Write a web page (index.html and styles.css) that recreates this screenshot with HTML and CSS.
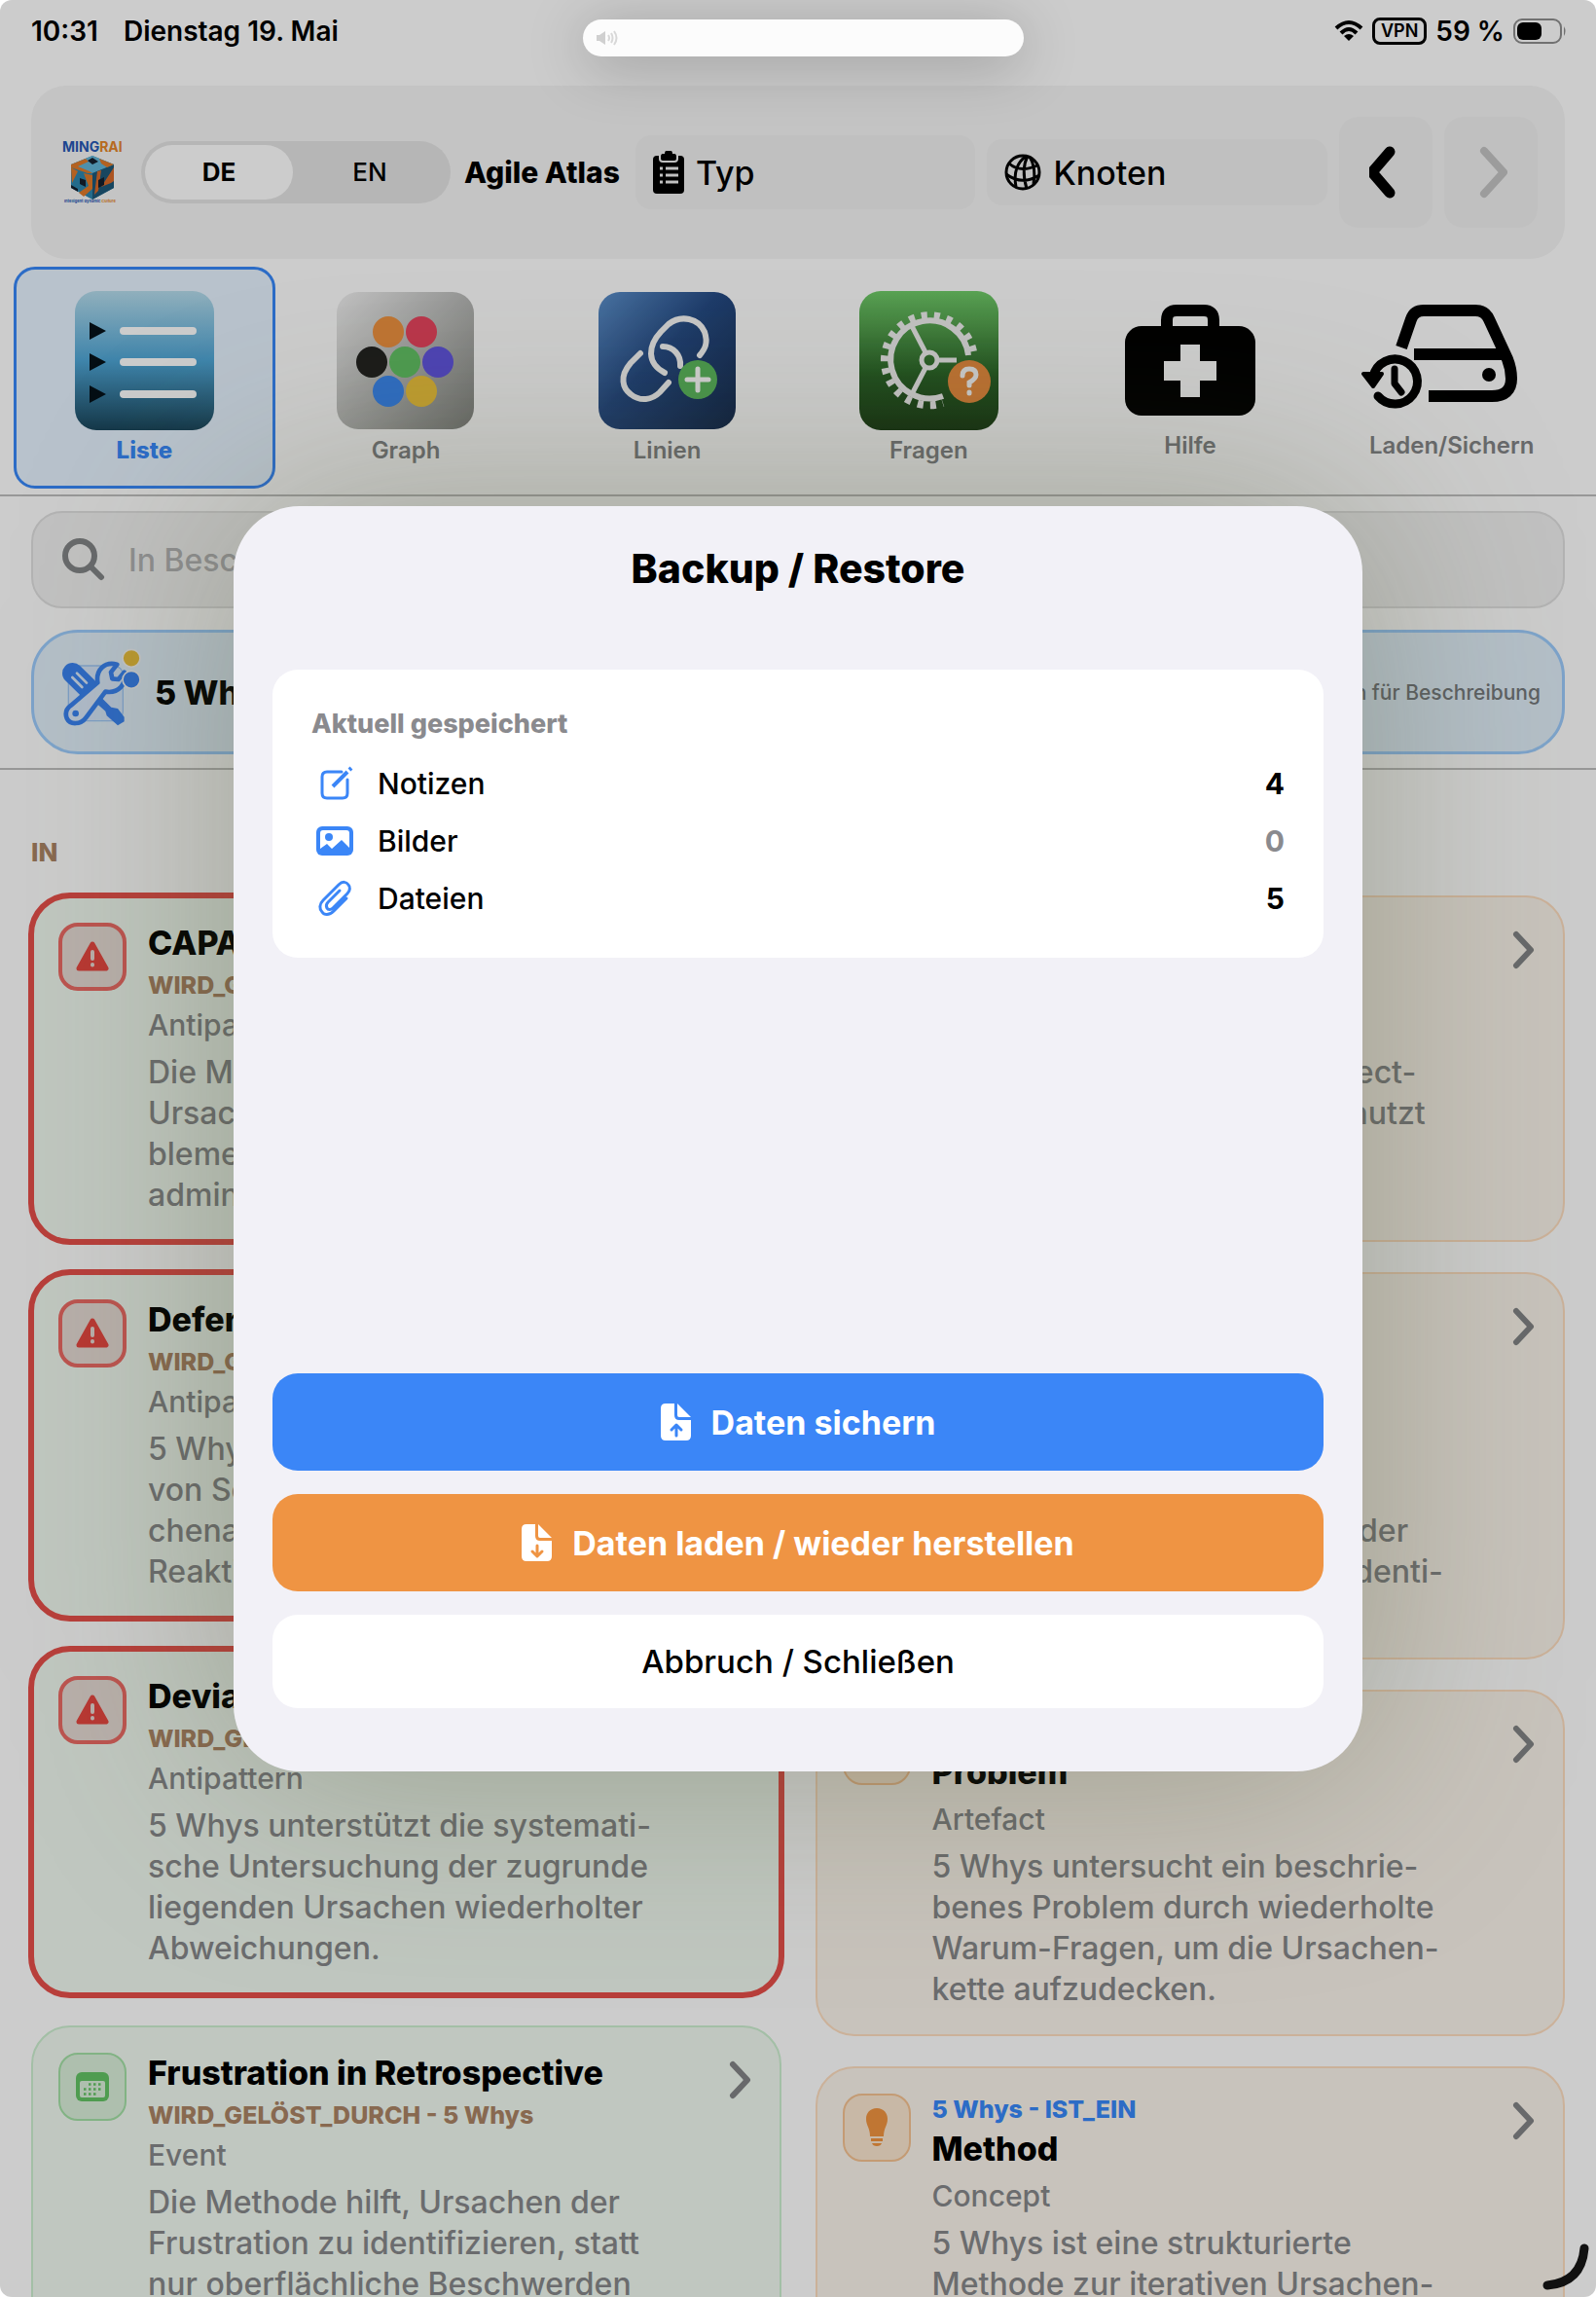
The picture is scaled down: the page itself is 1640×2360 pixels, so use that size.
FILE: index.html
```html
<!DOCTYPE html>
<html lang="de">
<head>
    <meta charset="UTF-8">
    <meta name="viewport" content="width=device-width, initial-scale=1.0">
    <title>Agile Atlas</title>
    <link rel="stylesheet" href="styles.css">
</head>
<body>
    <!-- Shared icons -->
    <svg class="sprite" aria-hidden="true">
        <symbol id="chevron" viewBox="0 0 24 40">
            <path d="M4 4L19 20L4 36" fill="none" stroke="currentColor" stroke-width="6" stroke-linecap="round" stroke-linejoin="round"/>
        </symbol>
        <symbol id="warning" viewBox="0 0 34 32">
            <path d="M17 3L31 28H3Z" fill="currentColor" stroke="currentColor" stroke-width="5" stroke-linejoin="round"/>
            <path d="M17 11V18M17 24V24.5" stroke="#e7dbd5" stroke-width="4" stroke-linecap="round"/>
        </symbol>
        <symbol id="bulb" viewBox="0 0 24 40">
            <path d="M12 0C5 0 1 5 1 11C1 18 5 20 5 29H19C19 20 23 18 23 11C23 5 19 0 12 0Z" fill="currentColor"/>
            <path d="M6 31H18V34H6ZM7 36H17Q16 39 12 39Q8 39 7 36Z" fill="currentColor"/>
        </symbol>
    </svg>

    <div class="app">
        <!-- Status Bar -->
        <div class="status-bar">
            <div class="status-left">
                <span>10:31</span>
                <span>Dienstag 19. Mai</span>
            </div>
            <div class="status-right">
                <svg width="30" height="24" viewBox="0 0 30 24" fill="none" stroke="#000" stroke-width="4">
                    <path d="M2 9Q15 -3 28 9M7 14Q15 6 23 14"/>
                    <path d="M15 22L10 17Q15 13 20 17Z" fill="#000" stroke="none"/>
                </svg>
                <span class="vpn">VPN</span>
                <span>59 %</span>
                <svg width="55" height="28" viewBox="0 0 55 28">
                    <rect x="1" y="2" width="48" height="24" rx="8" fill="none" stroke="#8e8e8e" stroke-width="2"/>
                    <rect x="4" y="5" width="25" height="18" rx="6"/>
                    <path d="M52 9Q55 14 52 19Z" fill="#8e8e8e"/>
                </svg>
            </div>
        </div>

        <!-- Header -->
        <header class="toolbar">
            <svg class="logo" viewBox="0 0 62 66">
                <text x="0" y="12" class="logo-name" fill="#2658b4">MING<tspan fill="#e48528">RAI</tspan></text>
                <path d="M31 16L53 25V49L31 61L9 49V25Z" fill="#2e86ae"/>
                <path d="M31 16L53 25L31 34L9 25Z" fill="#62b4d6"/>
                <path d="M31 34L53 25V49L31 61Z" fill="#1d5878"/>
                <path d="M9 25L24 19L27 22L16 27L28 32L31 34L26 34L9 28ZM38 19L53 25L46 28L40 24ZM9 28L16 32L10 44ZM22 34L31 36V50L22 58L17 54L27 47Z" fill="#e07a28"/>
                <path d="M53 28L40 48L50 44L53 42ZM36 32L40 31L37 52L33 56Z" fill="#d8692a"/>
                <path d="M26 21L31 18L37 22L31 25ZM18 39L24 41V48L18 45ZM37 41L43 38V46L37 49ZM9 46L16 50V53L9 49Z" fill="#15202e"/>
                <text x="2" y="64" class="logo-claim" fill="#2658b4">Intelligent dynamic <tspan fill="#e48528">Culture</tspan></text>
            </svg>
            <div class="segmented">
                <input type="radio" name="lang" id="lang-de" checked>
                <label for="lang-de">DE</label>
                <input type="radio" name="lang" id="lang-en">
                <label for="lang-en">EN</label>
            </div>
            <h1 class="app-name">Agile Atlas</h1>
            <button class="filter filter-type">
                <svg width="32" height="44" viewBox="0 0 32 44">
                    <path d="M4 5H28Q32 5 32 9V40Q32 44 28 44H4Q0 44 0 40V9Q0 5 4 5Z"/>
                    <path d="M7 3V8Q7 11 10 11H22Q25 11 25 8V3" fill="none" stroke="#f1f1f1" stroke-width="2"/>
                    <path d="M10 3H12A4 4 0 0 1 20 3H22Q24 3 24 6Q24 9 21 9H11Q8 9 8 6Q8 3 10 3Z"/>
                    <path d="M7 18H10M13 18H26M7 25H10M13 25H26M7 32H10M13 32H26" stroke="#f1f1f1" stroke-width="3"/>
                </svg>
                Typ
            </button>
            <button class="filter">
                <svg width="38" height="38" viewBox="0 0 38 38" fill="none" stroke="#000" stroke-width="3">
                    <circle cx="19" cy="19" r="17"/>
                    <path d="M23 2Q8 12 12 34M24 2Q17 16 23 36M26 3Q33 14 30 31M5 10Q16 20 34 12M2 21Q18 33 36 22"/>
                </svg>
                Knoten
            </button>
            <button class="nav-button" aria-label="Zurück">
                <svg width="34" height="56" viewBox="6 0 34 56"><path d="M27 7L9 28L27 49" fill="none" stroke="#000" stroke-width="11" stroke-linecap="round" stroke-linejoin="round"/></svg>
            </button>
            <button class="nav-button" aria-label="Vor">
                <svg width="34" height="56" viewBox="-4 0 34 56"><path d="M6 6L26 28L6 50" fill="none" stroke="#c4c4c4" stroke-width="8" stroke-linecap="round" stroke-linejoin="round"/></svg>
            </button>
        </header>

        <!-- Tabs -->
        <nav class="tabs">
            <button class="tab active">
                <svg width="143" height="143" viewBox="0 0 143 143">
                    <defs><linearGradient id="g-list" x2="0" y2="1"><stop offset="0" stop-color="#b5dcec"/><stop offset=".5" stop-color="#4fa6d6"/><stop offset="1" stop-color="#1b465b"/></linearGradient></defs>
                    <rect width="143" height="143" rx="22" fill="url(#g-list)"/>
                    <path d="M15 32L32 41L15 50ZM15 64L32 73L15 82ZM15 97L32 106L15 115Z" fill="#06121a"/>
                    <path d="M50 41H121M50 73H121M50 106H121" stroke="#fff" stroke-width="8" stroke-linecap="round"/>
                </svg>
                <span>Liste</span>
            </button>
            <button class="tab">
                <svg width="143" height="143" viewBox="0 0 143 143">
                    <defs><linearGradient id="g-graph" x2="1" y2="1"><stop offset="0" stop-color="#f2f2f2"/><stop offset="1" stop-color="#80827e"/></linearGradient></defs>
                    <rect x="1" y="1" width="141" height="141" rx="22" fill="url(#g-graph)"/>
                    <circle cx="54" cy="42" r="16" fill="#ee9140"/>
                    <circle cx="88" cy="42" r="16" fill="#e8445e"/>
                    <circle cx="37" cy="73" r="16" fill="#222220"/>
                    <circle cx="71" cy="73" r="16" fill="#62c264"/>
                    <circle cx="105" cy="73" r="16" fill="#6154e0"/>
                    <circle cx="54" cy="103" r="16" fill="#3a87f0"/>
                    <circle cx="88" cy="103" r="16" fill="#eec43c"/>
                </svg>
                <span>Graph</span>
            </button>
            <button class="tab">
                <svg width="143" height="143" viewBox="0 0 143 143">
                    <defs><linearGradient id="g-link" x2="1" y2="1"><stop offset="0" stop-color="#5c90cc"/><stop offset=".45" stop-color="#264b84"/><stop offset="1" stop-color="#152a4c"/></linearGradient></defs>
                    <rect x="1" y="1" width="141" height="141" rx="22" fill="url(#g-link)"/>
                    <g fill="none" stroke="#f8f8f8" stroke-width="6" stroke-linecap="round">
                        <path d="M69 84C50 74 52 56 65 42L73 34C86 24 104 28 110 42C114 54 110 60 105 66"/>
                        <path d="M44 64L34 74C22 88 26 100 34 106C44 114 56 112 64 104L73 94"/>
                        <path d="M67 57C78 57 86 66 85 77"/>
                    </g>
                    <circle cx="103" cy="91" r="20" fill="#5cba5e"/>
                    <path d="M103 80V102M92 91H114" stroke="#fff" stroke-width="5" stroke-linecap="round"/>
                </svg>
                <span>Linien</span>
            </button>
            <button class="tab">
                <svg width="143" height="143" viewBox="0 0 143 143">
                    <defs><linearGradient id="g-ask" x2="0" y2="1"><stop offset="0" stop-color="#70cc69"/><stop offset=".6" stop-color="#2b6428"/><stop offset="1" stop-color="#1c3e17"/></linearGradient></defs>
                    <rect width="143" height="143" rx="22" fill="url(#g-ask)"/>
                    <g fill="none" stroke="#f0f0f0">
                        <path d="M112 66A40 40 0 1 0 86 108" stroke-width="6"/>
                        <path d="M117 62A46 46 0 1 0 86 115" stroke-width="8" stroke-dasharray="6 7"/>
                        <circle cx="72" cy="71" r="8" stroke-width="5"/>
                        <path d="M68 63L54 36M68 79L54 106M80 71H100" stroke-width="5"/>
                    </g>
                    <circle cx="113" cy="93" r="22" fill="#e88d3f"/>
                    <path d="M106 87Q106 80 113 80Q120 80 120 86Q120 90 113 94V97M113 104V105" fill="none" stroke="#f8f8f8" stroke-width="5" stroke-linecap="round"/>
                </svg>
                <span>Fragen</span>
            </button>
            <button class="tab">
                <svg width="134" height="138" viewBox="0 -14 134 138">
                    <path d="M43 28V16Q43 6 53 6H81Q91 6 91 16V28" fill="none" stroke="#000" stroke-width="12"/>
                    <rect y="22" width="134" height="92" rx="17"/>
                    <path d="M67 51V85M50 68H84" stroke="#fff" stroke-width="20" stroke-linecap="square"/>
                </svg>
                <span>Hilfe</span>
            </button>
            <button class="tab">
                <svg width="186" height="138" viewBox="0 -14 186 138" fill="none" stroke="#000" stroke-width="12">
                    <path d="M41 44L51 15Q54 6 64 6H117Q127 6 131 15L150 56Q154 66 154 76Q154 94 134 94H69"/>
                    <path d="M54 51H144"/>
                    <circle cx="131" cy="72" r="7" fill="#000" stroke="none"/>
                    <path d="M12 74A23 23 0 1 1 17 94" stroke-width="9" stroke-linecap="round"/>
                    <path d="M2 71H21L12 84Z" fill="#000" stroke-width="4" stroke-linejoin="round"/>
                    <path d="M34 66V81L41 90" stroke-width="7" stroke-linecap="round" stroke-linejoin="round"/>
                </svg>
                <span>Laden/Sichern</span>
            </button>
        </nav>

        <!-- Search -->
        <section class="finder">
            <label class="search">
                <svg width="44" height="44" viewBox="0 0 44 44" fill="none" stroke="#838587" stroke-width="6" stroke-linecap="round"><circle cx="18" cy="18" r="15"/><path d="M29 29L40 40"/></svg>
                <input type="search" placeholder="In Beschreibung suchen" aria-label="Suche">
            </label>
            <div class="node">
                <svg width="82" height="80" viewBox="36 44 246 240">
                    <rect x="58" y="98" width="168" height="170" rx="28" fill="#d6e7fb" stroke="#9dc6f5" stroke-width="4"/>
                    <path d="M71 121L116 165" stroke="#3983f2" stroke-width="64" stroke-linecap="round"/>
                    <path d="M70 134L100 164M84 121L114 151" stroke="#dbe9fa" stroke-width="8" stroke-linecap="round"/>
                    <path d="M140 210L160 196L190 226L210 230L230 256V270L210 282L176 252L172 238Z" fill="#3983f2"/>
                    <path d="M148 150C142 112 168 84 208 94L189 118L193 138L212 140L230 118C238 156 212 184 172 178L112 258C95 281 62 280 53 260C47 244 52 230 66 220Z" fill="#dbe9fa" stroke="#3983f2" stroke-width="14" stroke-linejoin="round"/>
                    <circle cx="80" cy="245" r="10" fill="#3983f2"/>
                    <circle cx="252" cy="75" r="27" fill="#e9bf3c" stroke="#f4f4f4" stroke-width="5"/>
                    <circle cx="252" cy="141" r="27" fill="#3983f2" stroke="#f4f4f4" stroke-width="5"/>
                </svg>
                <h2>5 Whys</h2>
                <span>Tippen für Beschreibung</span>
            </div>
        </section>

        <!-- Relations -->
        <main class="relations">
            <section class="column">
                <h3 class="column-title">IN</h3>
                <article class="card green alert">
                    <div class="badge"><svg width="34" height="32"><use href="#warning"/></svg></div>
                    <div class="card-body">
                        <h4>CAPA</h4>
                        <p class="relation">WIRD_GELÖST_DURCH - 5 Whys</p>
                        <p class="type">Antipattern</p>
                        <p class="text">Die Methode 5 Whys deckt<br>Ursachen auf, damit Pro-<br>bleme nicht nur formal und<br>administrativ enden.</p>
                    </div>
                    <svg class="chevron" width="24" height="40"><use href="#chevron"/></svg>
                </article>
                <article class="card green alert">
                    <div class="badge"><svg width="34" height="32"><use href="#warning"/></svg></div>
                    <div class="card-body">
                        <h4>Defensive</h4>
                        <p class="relation">WIRD_GELÖST_DURCH - 5 Whys</p>
                        <p class="type">Antipattern</p>
                        <p class="text">5 Whys lenkt den Blick<br>von Schuld auf die Ursa-<br>chenanalyse und mindert<br>Reaktionen.</p>
                    </div>
                    <svg class="chevron" width="24" height="40"><use href="#chevron"/></svg>
                </article>
                <article class="card green alert">
                    <div class="badge"><svg width="34" height="32"><use href="#warning"/></svg></div>
                    <div class="card-body">
                        <h4>Deviation</h4>
                        <p class="relation">WIRD_GELÖST_DURCH - 5 Whys</p>
                        <p class="type">Antipattern</p>
                        <p class="text">5 Whys unterstützt die systemati-<br>sche Untersuchung der zugrunde<br>liegenden Ursachen wiederholter<br>Abweichungen.</p>
                    </div>
                    <svg class="chevron" width="24" height="40"><use href="#chevron"/></svg>
                </article>
                <article class="card green">
                    <div class="badge">
                        <svg width="34" height="30" viewBox="0 0 34 30">
                            <rect width="34" height="30" rx="6" fill="#63c464"/>
                            <rect x="4" y="9" width="26" height="17" rx="2" fill="#daefda"/>
                            <path d="M13 12.500H27M8 17.500H27M8 22.500H22" stroke="#63c464" stroke-width="2.500" stroke-dasharray="2.500 2.500"/>
                        </svg>
                    </div>
                    <div class="card-body">
                        <h4>Frustration in Retrospective</h4>
                        <p class="relation">WIRD_GELÖST_DURCH - 5 Whys</p>
                        <p class="type">Event</p>
                        <p class="text">Die Methode hilft, Ursachen der<br>Frustration zu identifizieren, statt<br>nur oberflächliche Beschwerden<br>zu sammeln.</p>
                    </div>
                    <svg class="chevron" width="24" height="40"><use href="#chevron"/></svg>
                </article>
            </section>

            <section class="column">
                <h3 class="column-title out">OUT</h3>
                <article class="card orange">
                    <div class="badge"><svg width="24" height="40"><use href="#bulb"/></svg></div>
                    <div class="card-body">
                        <p class="relation">5 Whys - UNTERSTÜTZT</p>
                        <h4>Inspect</h4>
                        <p class="type">Concept</p>
                        <p class="text">5 Whys wird häufiger in Inspect-<br>und-Adapt-Workshop oft genutzt<br>und vertieft nur die Analyse-<br>ergebnisse.</p>
                    </div>
                    <svg class="chevron" width="24" height="40"><use href="#chevron"/></svg>
                </article>
                <article class="card orange">
                    <div class="badge"><svg width="24" height="40"><use href="#bulb"/></svg></div>
                    <div class="card-body">
                        <p class="relation">5 Whys - UNTERSTÜTZT</p>
                        <h4>Kaizen</h4>
                        <p class="type">Concept</p>
                        <p class="text">5 Whys hilft dem Team<br>dabei im Ablauf seine tiefere<br>Ursache zu finden und auch der<br>Verbesserung diese klar zu identi-<br>fizieren.</p>
                    </div>
                    <svg class="chevron" width="24" height="40"><use href="#chevron"/></svg>
                </article>
                <article class="card orange">
                    <div class="badge"><svg width="24" height="40"><use href="#bulb"/></svg></div>
                    <div class="card-body">
                        <p class="relation">5 Whys - UNTERSUCHT</p>
                        <h4>Problem</h4>
                        <p class="type">Artefact</p>
                        <p class="text">5 Whys untersucht ein beschrie-<br>benes Problem durch wiederholte<br>Warum-Fragen, um die Ursachen-<br>kette aufzudecken.</p>
                    </div>
                    <svg class="chevron" width="24" height="40"><use href="#chevron"/></svg>
                </article>
                <article class="card orange">
                    <div class="badge"><svg width="24" height="40"><use href="#bulb"/></svg></div>
                    <div class="card-body">
                        <p class="relation">5 Whys - IST_EIN</p>
                        <h4>Method</h4>
                        <p class="type">Concept</p>
                        <p class="text">5 Whys ist eine strukturierte<br>Methode zur iterativen Ursachen-<br>analyse.</p>
                    </div>
                    <svg class="chevron" width="24" height="40"><use href="#chevron"/></svg>
                </article>
            </section>
        </main>

        <!-- Backup Dialog -->
        <div class="backdrop">
            <div class="dialog" role="dialog" aria-modal="true" aria-labelledby="dialog-title">
                <h2 id="dialog-title">Backup / Restore</h2>
                <div class="stored">
                    <h3>Aktuell gespeichert</h3>
                    <div class="stored-row">
                        <svg width="40" height="40" viewBox="0 0 40 40" fill="none" stroke="#3b86f7" stroke-width="3">
                            <path d="M27 8H12Q7 8 7 13V30Q7 35 12 35H28Q33 35 33 30V16" stroke-linecap="round"/>
                            <path d="M18 23L33 8M35 6L37 4" stroke-width="4"/>
                        </svg>
                        <span>Notizen</span><b>4</b>
                    </div>
                    <div class="stored-row">
                        <svg width="40" height="40" viewBox="0 0 40 40">
                            <rect x="1" y="5" width="38" height="30" rx="6" fill="#3b86f7"/>
                            <path d="M5 28V12Q5 9 8 9H32Q35 9 35 12V27L27 19L17 28L12 23Z" fill="#fff"/>
                            <circle cx="14" cy="16" r="4" fill="#3b86f7"/>
                        </svg>
                        <span>Bilder</span><b class="empty">0</b>
                    </div>
                    <div class="stored-row">
                        <svg width="40" height="40" viewBox="0 0 40 40" fill="none" stroke="#3b86f7" stroke-width="3" stroke-linecap="round">
                            <path d="M32 20L19 33C14 38 9 37 7 34C4 31 4 26 8 22L24 6C28 2 32 3 34 6C36 8 36 12 33 15L18 30C16 32 13 32 12 30C11 28 11 26 13 24L25 12"/>
                        </svg>
                        <span>Dateien</span><b>5</b>
                    </div>
                </div>
                <div class="actions">
                    <button class="action save">
                        <svg width="32" height="38" viewBox="0 0 32 38">
                            <path d="M5 0H14V12Q14 17 19 17H31V33Q31 38 26 38H5Q0 38 0 33V5Q0 0 5 0ZM17 0L31 14H19Q17 14 17 12Z" fill="#fff"/>
                            <path d="M16 33V23M11 27L16 22L21 27" fill="none" stroke="#3b86f7" stroke-width="3" stroke-linecap="round" stroke-linejoin="round"/>
                        </svg>
                        Daten sichern
                    </button>
                    <button class="action load">
                        <svg width="32" height="38" viewBox="0 0 32 38">
                            <path d="M5 0H14V12Q14 17 19 17H31V33Q31 38 26 38H5Q0 38 0 33V5Q0 0 5 0ZM17 0L31 14H19Q17 14 17 12Z" fill="#fff"/>
                            <path d="M16 22V32M11 28L16 33L21 28" fill="none" stroke="#ef9443" stroke-width="3" stroke-linecap="round" stroke-linejoin="round"/>
                        </svg>
                        Daten laden / wieder herstellen
                    </button>
                    <button class="action cancel">Abbruch / Schließen</button>
                </div>
            </div>
        </div>

        <!-- Volume HUD -->
        <div class="volume">
            <svg width="24" height="18" viewBox="0 0 24 18" fill="none" stroke="#d8d8d8" stroke-width="2">
                <path d="M1 6H4L10 2V16L4 12H1Z" fill="#d0d0d0" stroke="none"/>
                <path d="M13 6Q15 9 13 12M16 4Q19 9 16 14M19 2Q24 9 19 16"/>
            </svg>
        </div>
        <svg class="corner" width="48" height="48" viewBox="0 0 48 48"><path d="M43 5Q40 40 5 43" fill="none" stroke="#111" stroke-width="9" stroke-linecap="round"/></svg>
    </div>
</body>
</html>
```

FILE: styles.css
```css
* {
    box-sizing: border-box;
}

body {
    font-family: Inter, "Liberation Sans", sans-serif;
    margin: 0;
    background-color: #ffffff;
    color: #000000;
}

h1, h2, h3, h4, p {
    margin: 0;
}

button {
    border: none;
    font-family: inherit;
    color: inherit;
    cursor: pointer;
}

svg {
    flex: none;
}

.sprite {
    display: none;
}

.app {
    position: relative;
    display: flex;
    flex-direction: column;
    height: 100vh;
    overflow: hidden;
    border-radius: 12px;
    background-color: #ffffff;
}

/* Status bar */
.status-bar {
    display: flex;
    flex: none;
    justify-content: space-between;
    align-items: center;
    height: 64px;
    padding: 0 30px 0 32px;
    font-size: 28px;
    font-weight: 600;
}

.status-left {
    display: flex;
    gap: 26px;
}

.status-right {
    display: flex;
    align-items: center;
    gap: 9px;
}

.vpn {
    padding: 0 6px;
    border: 3px solid #000000;
    border-radius: 8px;
    font-size: 18px;
    line-height: 22px;
}

/* Toolbar */
.toolbar {
    display: flex;
    flex: none;
    align-items: center;
    gap: 12px;
    height: 178px;
    margin: 24px 32px 8px;
    padding: 0 28px 0 32px;
    border-radius: 36px;
    background-color: #f5f5f5;
}

.logo {
    width: 62px;
    height: 66px;
}

.logo-name {
    font-size: 14px;
    font-weight: 700;
}

.logo-claim {
    font-size: 4px;
    font-weight: 700;
}

.segmented {
    display: flex;
    width: 318px;
    height: 64px;
    margin: 0 2px 0 7px;
    padding: 4px;
    border-radius: 32px;
    background-color: #e4e4e4;
}

.segmented input {
    position: absolute;
    opacity: 0;
}

.segmented label {
    flex: 1;
    border-radius: 28px;
    text-align: center;
    font-size: 26px;
    font-weight: 500;
    line-height: 56px;
}

.segmented input:checked + label {
    flex: 0 0 152px;
    background-color: #ffffff;
    font-weight: 700;
}

.app-name {
    margin-right: 4px;
    font-size: 30px;
    font-weight: 800;
    white-space: nowrap;
}

.filter {
    display: flex;
    flex: 1;
    align-items: center;
    gap: 12px;
    height: 68px;
    padding: 0 18px;
    border-radius: 16px;
    background-color: #f1f1f1;
    font-size: 34px;
    font-weight: 500;
}

.filter-type {
    height: 76px;
}

.nav-button {
    display: flex;
    justify-content: center;
    align-items: center;
    width: 96px;
    height: 114px;
    border-radius: 20px;
    background-color: #f1f1f1;
}

/* Tabs */
.tabs {
    display: grid;
    flex: none;
    grid-template-columns: repeat(6, 1fr);
    padding: 0 14px 6px;
    border-bottom: 2px solid #bfbfbf;
}

.tab {
    display: flex;
    flex-direction: column;
    align-items: center;
    height: 228px;
    padding: 22px 0 0;
    border: 3px solid transparent;
    border-radius: 22px;
    background: none;
    color: #828486;
    font-size: 24px;
    font-weight: 600;
    line-height: 42px;
}

.tab.active {
    border-color: #3787f8;
    background-color: #e7f3ff;
    color: #3787f8;
    font-weight: 800;
}

/* Search and current node */
.finder {
    display: flex;
    flex: none;
    flex-direction: column;
    gap: 22px;
    padding: 15px 32px 14px;
    border-bottom: 2px solid #bfbfbf;
}

.search {
    display: flex;
    align-items: center;
    gap: 22px;
    height: 100px;
    padding: 0 30px;
    border: 2px solid #e0e0e0;
    border-radius: 32px;
    background-color: #f2f2f2;
}

.search input {
    flex: 1;
    border: none;
    outline: none;
    background: none;
    font-family: inherit;
    font-size: 32px;
    font-weight: 500;
}

.search input::placeholder {
    color: #b2b2b5;
}

.node {
    display: flex;
    align-items: center;
    gap: 14px;
    height: 128px;
    padding: 0 22px 10px 28px;
    border: 3px solid #9dccfd;
    border-radius: 48px;
    background-color: #e1effb;
}

.node h2 {
    flex: 1;
    padding-top: 10px;
    font-size: 34px;
    font-weight: 800;
}

.node span {
    padding-top: 10px;
    color: #75787c;
    font-size: 21px;
    font-weight: 500;
}

/* Relation columns */
.relations {
    display: grid;
    grid-template-columns: 1fr 1fr;
    gap: 35px;
    padding: 72px 32px 0;
}

.column {
    display: flex;
    flex-direction: column;
    gap: 31px;
}

.column-title {
    color: #aa8464;
    font-size: 26px;
    font-weight: 800;
    line-height: 26px;
}

.column-title.out {
    color: #3787f8;
}

.card {
    display: flex;
    align-items: flex-start;
    padding: 26px 24px 25px 26px;
    border: 2px solid;
    border-radius: 40px;
}

.card.green {
    border-color: #ccefd0;
    background-color: #f1f9f0;
}

.card.orange {
    border-color: #fedec0;
    background-color: #fbf4eb;
}

.card.alert {
    outline: 6px solid #e74f4a;
    outline-offset: -3px;
}

.badge {
    display: flex;
    flex: none;
    justify-content: center;
    align-items: center;
    width: 70px;
    height: 70px;
    margin-right: 22px;
    border: 2px solid;
    border-radius: 20px;
}

.green .badge {
    border-color: #a3e0a6;
    background-color: #daefda;
}

.orange .badge {
    border-color: #f5c291;
    background-color: #fae6d0;
    color: #f09440;
}

.alert .badge {
    border: 4px solid #eb6964;
    background-color: #e7dbd5;
    color: #e74640;
}

.card-body {
    flex: 1;
}

.card h4 {
    font-size: 34px;
    font-weight: 800;
    line-height: 42px;
}

.relation {
    margin-top: 6px;
    color: #aa8464;
    font-size: 25px;
    font-weight: 800;
    line-height: 32px;
}

.orange .relation {
    margin: 0 0 4px;
    color: #3787f8;
}

.type {
    margin-top: 6px;
    color: #86888a;
    font-size: 30px;
    font-weight: 500;
    line-height: 38px;
}

.orange .type {
    margin-top: 8px;
}

.text {
    margin-top: 9px;
    color: #86888a;
    font-size: 32px;
    font-weight: 500;
    line-height: 42px;
}

.chevron {
    margin: 8px 4px 0 0;
    color: #828486;
}

/* Backup dialog */
.backdrop {
    position: absolute;
    inset: 0;
    display: flex;
    justify-content: center;
    align-items: center;
    padding-bottom: 20px;
    background-color: rgba(0, 0, 0, 0.2);
}

.dialog {
    display: flex;
    flex-direction: column;
    width: 1160px;
    max-width: 90%;
    min-height: 1300px;
    padding: 40px 40px 65px;
    border-radius: 68px;
    background-color: #f2f1f7;
    box-shadow: 0 0 220px rgba(80, 90, 50, 0.36);
}

.dialog h2 {
    font-size: 41px;
    font-weight: 800;
    line-height: 48px;
    text-align: center;
}

.stored {
    margin-top: 80px;
    padding: 36px 40px 32px;
    border-radius: 26px;
    background-color: #ffffff;
}

.stored h3 {
    margin-bottom: 11px;
    color: #8a8a8e;
    font-size: 27px;
    font-weight: 800;
    line-height: 40px;
}

.stored-row {
    display: flex;
    align-items: center;
    gap: 24px;
    height: 59px;
    padding-left: 4px;
    font-size: 30px;
    font-weight: 500;
}

.stored-row b {
    margin-left: auto;
    font-weight: 700;
}

.stored-row .empty {
    color: #8a8a8e;
}

.actions {
    display: flex;
    flex-direction: column;
    gap: 24px;
    margin-top: auto;
}

.action {
    display: flex;
    justify-content: center;
    align-items: center;
    gap: 20px;
    height: 100px;
    border-radius: 26px;
    color: #ffffff;
    font-size: 34px;
    font-weight: 700;
}

.save {
    background-color: #3b86f7;
}

.load {
    background-color: #ef9443;
}

.cancel {
    height: 96px;
    background-color: #ffffff;
    color: #000000;
    font-size: 33px;
    font-weight: 500;
}

/* Overlays */
.volume {
    position: absolute;
    top: 20px;
    left: 50%;
    display: flex;
    align-items: center;
    width: 453px;
    height: 38px;
    margin-left: -221px;
    padding-left: 13px;
    border-radius: 19px;
    background-color: #fcfcfc;
    box-shadow: 0 8px 60px rgba(0, 0, 0, 0.26);
}

.corner {
    position: absolute;
    right: 7px;
    bottom: 7px;
}
```
